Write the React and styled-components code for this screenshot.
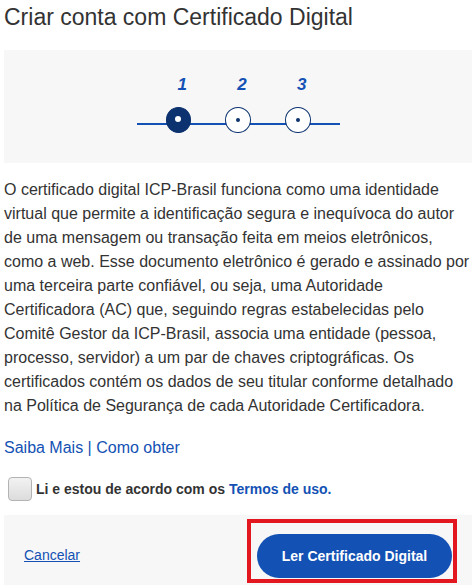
import React from "react";
import styled, { createGlobalStyle } from "styled-components";

const Global = createGlobalStyle`
  body {
    margin: 0;
    background: #fff;
    font-family: "Liberation Sans", Arial, sans-serif;
    color: #333;
  }
`;

const Page = styled.div`
  width: 468px;
  padding: 0 4px;
`;

const Title = styled.h2`
  margin: 0;
  padding-top: 4px;
  height: 50px;
  box-sizing: border-box;
  font-size: 23px;
  font-weight: normal;
  line-height: 26px;
  color: #333;
`;

const StepBox = styled.div`
  background: #f7f7f7;
  height: 113px;
  display: flex;
  flex-direction: column;
  align-items: center;
  padding-top: 25px;
  box-sizing: border-box;
`;

const StepRow = styled.div`
  width: 203px;
  display: flex;
  gap: 34px;
  padding: 0 29px;
  box-sizing: border-box;
`;

const CircleRow = styled(StepRow)`
  margin-top: 12px;
  background: linear-gradient(#1351b4, #1351b4) no-repeat 0 16px / 100% 2px;
`;

const Label = styled.span`
  width: 26px;
  text-align: center;
  font-size: 17px;
  font-weight: bold;
  font-style: italic;
  color: #1351b4;
  line-height: 20px;
  padding-left: 8px;
  box-sizing: border-box;
`;

const Circle = styled.span`
  width: 26px;
  height: 26px;
  border-radius: 50%;
  box-sizing: border-box;
  border: 1px solid #0c326f;
  background: ${(p) => (p.$active ? "#0c326f" : "#fff")};
  display: flex;
  justify-content: center;
  padding-top: ${(p) => (p.$active ? "8px" : "10px")};

  &::after {
    content: "";
    width: ${(p) => (p.$active ? "6px" : "4px")};
    height: ${(p) => (p.$active ? "6px" : "4px")};
    border-radius: 50%;
    background: ${(p) => (p.$active ? "#fff" : "#0c326f")};
  }
`;

const Text = styled.p`
  margin: 15px 0 0;
  font-size: 16px;
  line-height: 24px;
  color: #333;
`;

const Links = styled.div`
  margin-top: 18px;
  font-size: 16px;
  line-height: 24px;
  color: #1351b4;
`;

const Link = styled.a`
  color: #1351b4;
  text-decoration: none;
`;

const Agree = styled.label`
  display: flex;
  align-items: center;
  gap: 4px;
  margin-top: 17px;
  padding-left: 4px;
  font-size: 14px;
  font-weight: bold;
  color: #333;
`;

const Box = styled.span`
  width: 24px;
  height: 24px;
  box-sizing: border-box;
  border: 1px solid #b3b3b3;
  border-radius: 4px;
  background: linear-gradient(#f2f2f2, #dcdcdc);
`;

const Terms = styled.span`
  color: #1351b4;
`;

const Footer = styled.div`
  margin-top: 14px;
  background: #f7f7f7;
  height: 72px;
  display: flex;
  align-items: flex-start;
  justify-content: space-between;
  padding: 4px 15px 0 20px;
  box-sizing: border-box;
`;

const Cancel = styled.a`
  margin-top: 28px;
  font-size: 14px;
  color: #1351b4;
  text-decoration: underline;
`;

const Highlight = styled.div`
  border: 4px solid #e3171f;
  padding: 11px 1px 1px 6px;
`;

const Button = styled.button`
  width: 195px;
  height: 44px;
  border: none;
  border-radius: 22px;
  background: #1351b4;
  color: #fff;
  font-family: "Liberation Sans", Arial, sans-serif;
  font-size: 14px;
  font-weight: bold;
  display: block;
`;

export default function App() {
  return (
    <Page>
      <Global />
      <Title>Criar conta com Certificado Digital</Title>
      <StepBox>
        <StepRow>
          <Label>1</Label>
          <Label>2</Label>
          <Label>3</Label>
        </StepRow>
        <CircleRow>
          <Circle $active />
          <Circle />
          <Circle />
        </CircleRow>
      </StepBox>
      <Text>
        O certificado digital ICP-Brasil funciona como uma identidade virtual que permite a
        identificação segura e inequívoca do autor de uma mensagem ou transação feita em meios
        eletrônicos, como a web. Esse documento eletrônico é gerado e assinado por uma terceira
        parte confiável, ou seja, uma Autoridade Certificadora (AC) que, seguindo regras
        estabelecidas pelo Comitê Gestor da ICP-Brasil, associa uma entidade (pessoa, processo,
        servidor) a um par de chaves criptográficas. Os certificados contém os dados de seu
        titular conforme detalhado na Política de Segurança de cada Autoridade Certificadora.
      </Text>
      <Links>
        <Link href="#">Saiba Mais</Link> | <Link href="#">Como obter</Link>
      </Links>
      <Agree>
        <Box />
        Li e estou de acordo com os <Terms>Termos de uso.</Terms>
      </Agree>
      <Footer>
        <Cancel href="#">Cancelar</Cancel>
        <Highlight>
          <Button>Ler Certificado Digital</Button>
        </Highlight>
      </Footer>
    </Page>
  );
}
